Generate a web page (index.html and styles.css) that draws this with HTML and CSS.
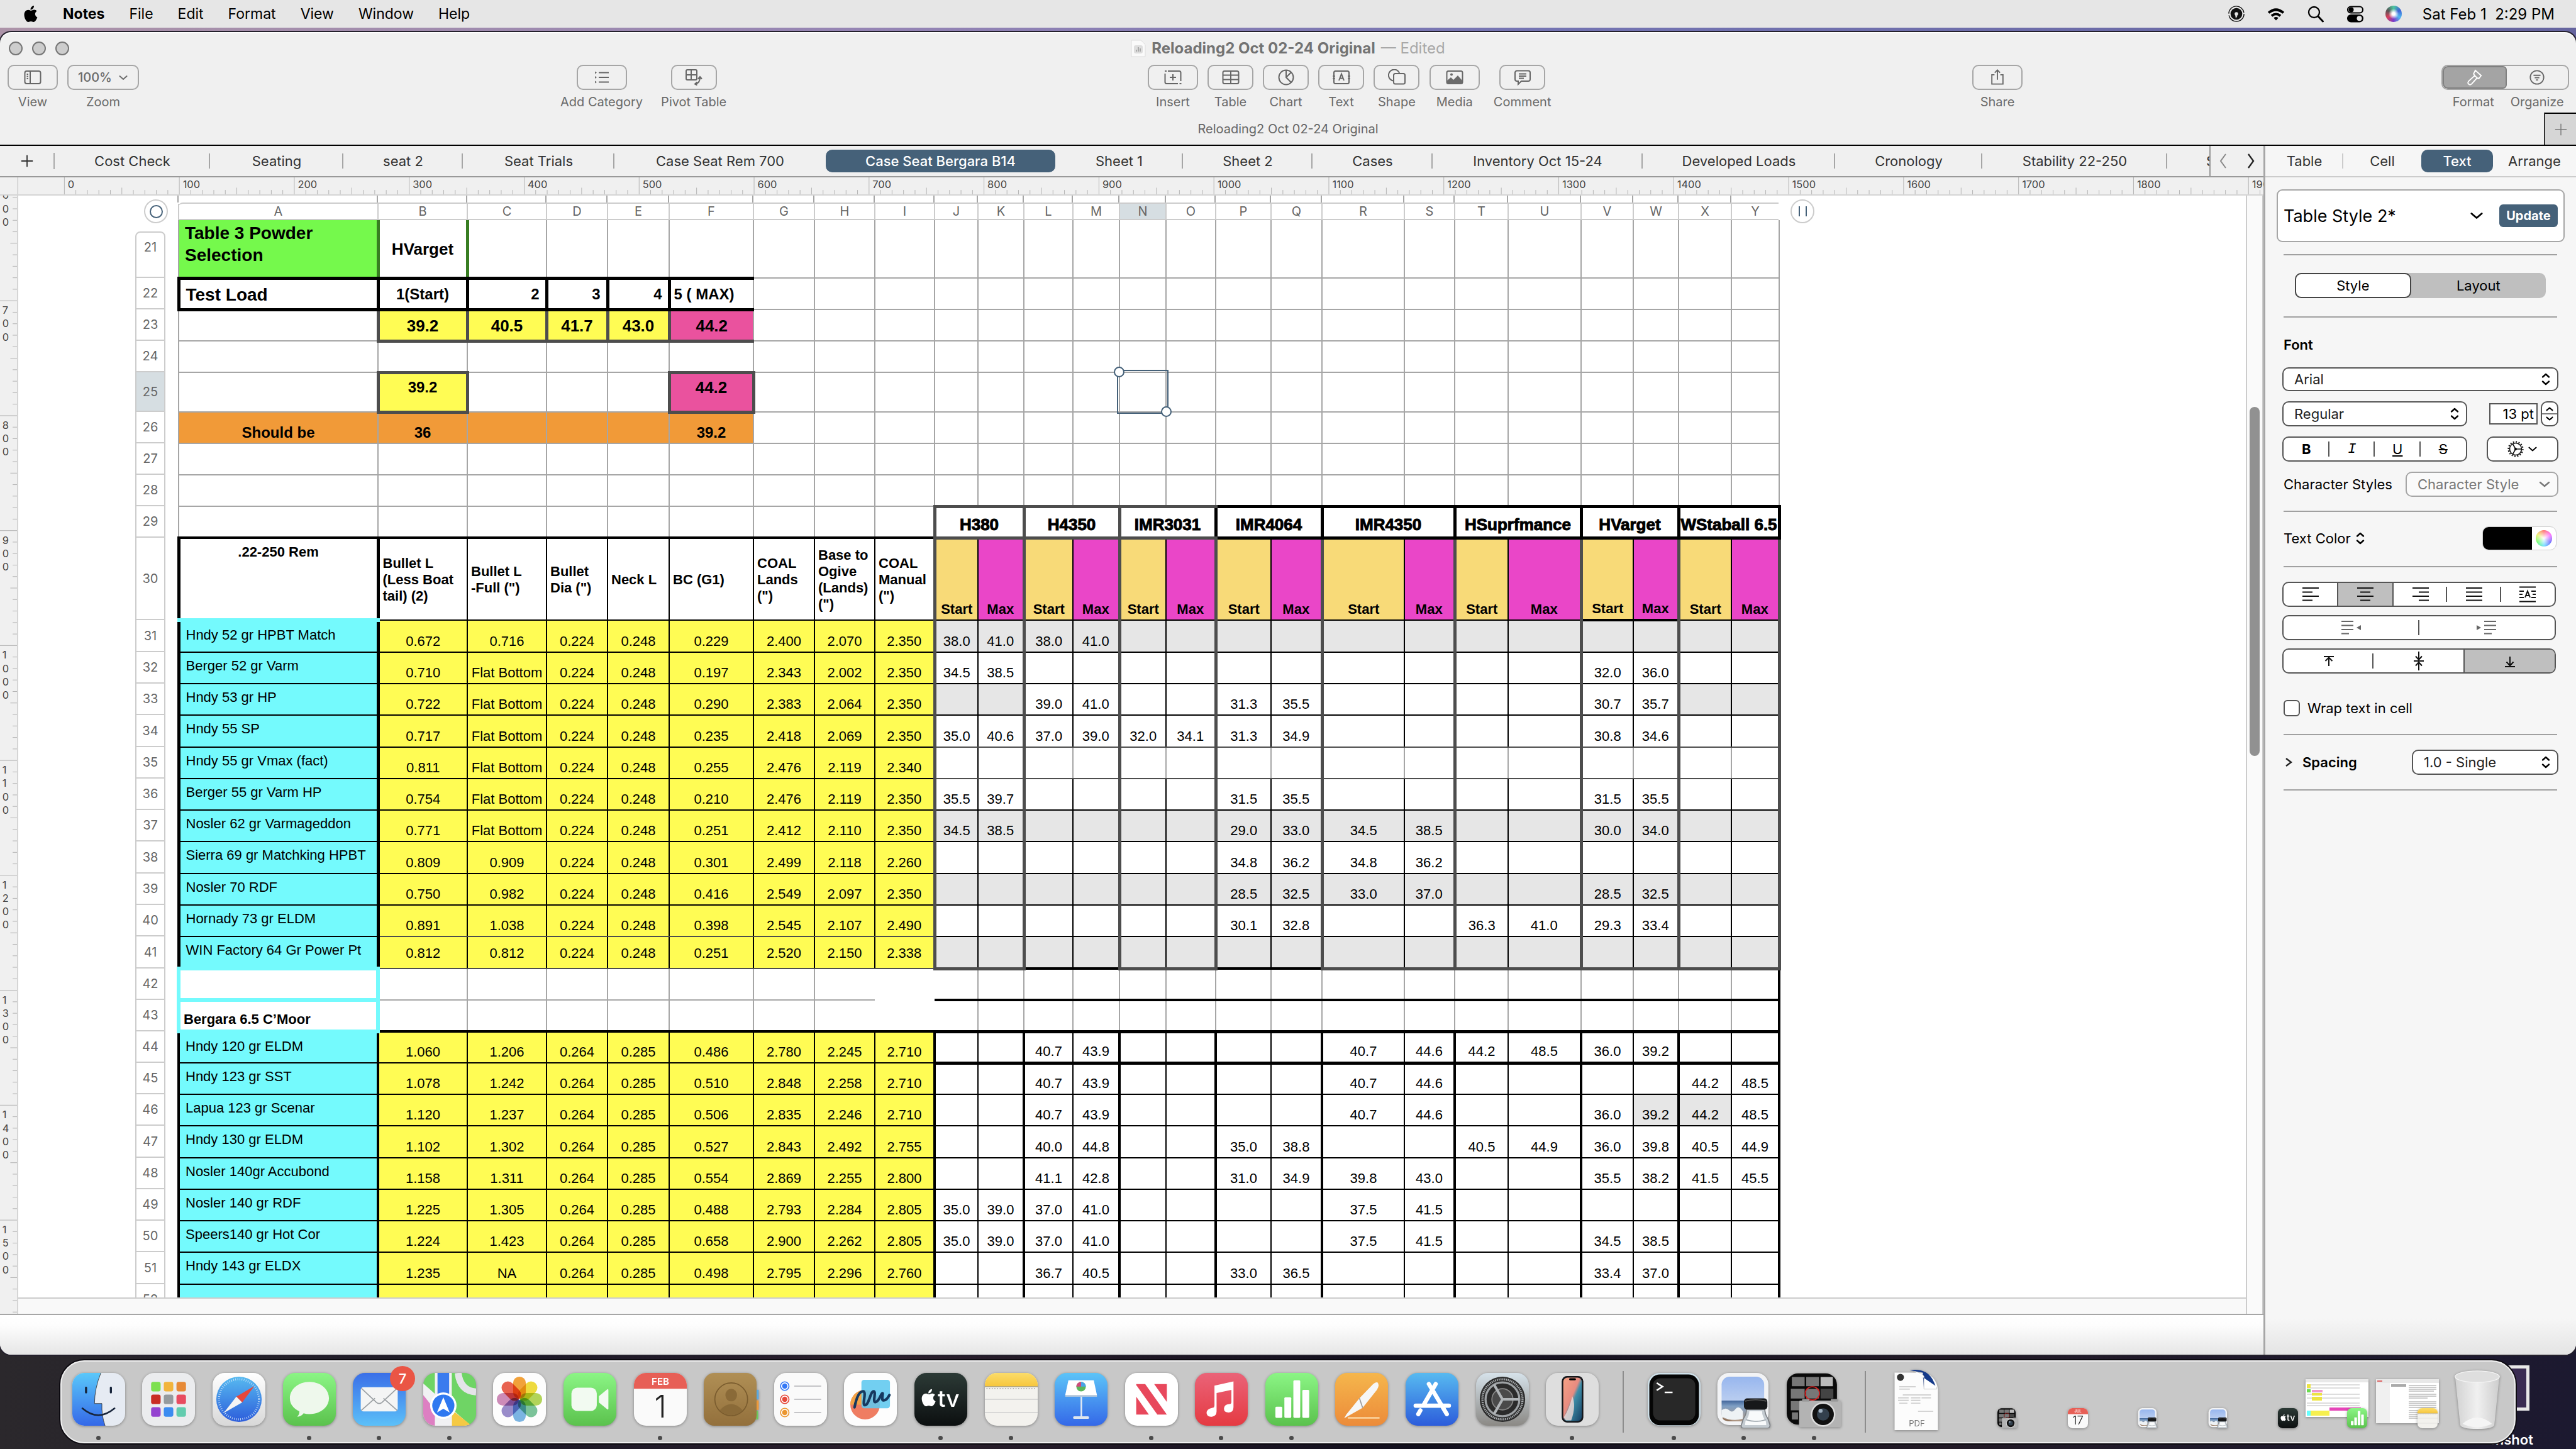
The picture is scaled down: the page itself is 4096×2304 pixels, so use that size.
FILE: index.html
```html
<!DOCTYPE html>
<html lang="en">
<head>
    <meta charset="UTF-8">
    <title>Reloading2 Oct 02-24 Original</title>
    <link rel="stylesheet" href="styles.css">
</head>
<body>
<svg class="defs" width="0" height="0" aria-hidden="true">
    <defs>
        <linearGradient id="g-finder" x1="0" y1="0" x2="0" y2="1"><stop offset="0" stop-color="#5ac8fa"/><stop offset="1" stop-color="#3468e8"/></linearGradient>
        <linearGradient id="g-green" x1="0" y1="0" x2="0" y2="1"><stop offset="0" stop-color="#8bf585"/><stop offset="1" stop-color="#5bc24d"/></linearGradient>
        <linearGradient id="g-mail" x1="0" y1="0" x2="0" y2="1"><stop offset="0" stop-color="#3a6fe8"/><stop offset="1" stop-color="#5cc0f8"/></linearGradient>
        <linearGradient id="g-keynote" x1="0" y1="0" x2="0" y2="1"><stop offset="0" stop-color="#5cc4f8"/><stop offset="1" stop-color="#3468e8"/></linearGradient>
        <linearGradient id="g-blue" x1="0" y1="0" x2="0" y2="1"><stop offset="0" stop-color="#57baf0"/><stop offset="1" stop-color="#2c5cdb"/></linearGradient>
        <linearGradient id="g-red" x1="0" y1="0" x2="0" y2="1"><stop offset="0" stop-color="#ea6378"/><stop offset="1" stop-color="#e53a42"/></linearGradient>
        <linearGradient id="g-orange" x1="0" y1="0" x2="0" y2="1"><stop offset="0" stop-color="#f5b64c"/><stop offset="1" stop-color="#ec8b3a"/></linearGradient>
        <linearGradient id="g-dark" x1="0" y1="0" x2="0" y2="1"><stop offset="0" stop-color="#2c3a36"/><stop offset="1" stop-color="#0c0f10"/></linearGradient>
        <linearGradient id="g-white" x1="0" y1="0" x2="0" y2="1"><stop offset="0" stop-color="#fff"/><stop offset="1" stop-color="#d8d8d8"/></linearGradient>
        <linearGradient id="g-gray" x1="0" y1="0" x2="0" y2="1"><stop offset="0" stop-color="#d6e2ea"/><stop offset="1" stop-color="#8b8985"/></linearGradient>
        <linearGradient id="g-yellow" x1="0" y1="0" x2="0" y2="1"><stop offset="0" stop-color="#fbdc6a"/><stop offset="1" stop-color="#f7c63c"/></linearGradient>
        <linearGradient id="g-tan" x1="0" y1="0" x2="0" y2="1"><stop offset="0" stop-color="#b08f55"/><stop offset="1" stop-color="#93703c"/></linearGradient>
        <linearGradient id="g-phone" x1="0" y1="0" x2="1" y2="1"><stop offset="0" stop-color="#f5a285"/><stop offset=".45" stop-color="#e88b80"/><stop offset=".55" stop-color="#3f8ea8"/><stop offset="1" stop-color="#163f63"/></linearGradient>
        <linearGradient id="g-sky" x1="0" y1="0" x2="0" y2="1"><stop offset="0" stop-color="#97b6ee"/><stop offset=".53" stop-color="#b9cdf0"/><stop offset=".54" stop-color="#44689c"/><stop offset=".66" stop-color="#7f9fc4"/><stop offset="1" stop-color="#b59a84"/></linearGradient>
        <linearGradient id="g-trash" x1="0" y1="0" x2="1" y2="0"><stop offset="0" stop-color="#d2d2d2"/><stop offset=".5" stop-color="#f0f0f0"/><stop offset="1" stop-color="#cdcdcd"/></linearGradient>
        <clipPath id="tile"><rect width="100" height="100" rx="23"/></clipPath>
    </defs>
    <symbol id="apple" viewBox="0 0 24 28"><path d="M17 1c.2 2-.6 3.600-1.700 4.800C14.200 7 12.700 7.600 11.500 7.400 11.300 5.700 12.100 4 13.100 2.900 14.200 1.800 15.800 1 17 1zM21.500 9.800c-4 2.600-3.200 8 .9 9.700C21.300 22.800 18.800 26.800 16.400 26.900c-1.700.1-2.300-1-4.200-1s-2.600 1-4.200 1C5 27 1.500 20.700 1.500 15.400c0-4.800 3-7.700 6.400-7.700 1.900 0 3.300 1.200 4.500 1.200S15.300 7.500 17.600 7.600c1.500.1 3 .8 3.900 2.200z"/></symbol>
    <symbol id="updown" viewBox="0 0 16 24"><path d="M3 8.500 8 4l5 4.500M3 15.500 8 20l5-4.500" fill="none" stroke="currentColor" stroke-width="2.400" stroke-linecap="round" stroke-linejoin="round"/></symbol>
    <symbol id="chev" viewBox="0 0 20 12"><path d="M3 3l7 6 7-6" fill="none" stroke="currentColor" stroke-width="2.400" stroke-linecap="round" stroke-linejoin="round"/></symbol>
    <symbol id="ic-calendar" viewBox="0 0 100 100"><g clip-path="url(#tile)"><rect width="100" height="100" fill="#fafafa"/><rect width="100" height="30" fill="#e75f56"/></g></symbol>
    <symbol id="ic-tv" viewBox="0 0 100 100"><rect width="100" height="100" rx="23" fill="url(#g-dark)"/><svg x="12" y="28" width="30" height="38" viewBox="0 0 24 28" fill="#fff"><path d="M17 1c.2 2-.6 3.600-1.700 4.800C14.200 7 12.700 7.600 11.500 7.400 11.300 5.700 12.100 4 13.100 2.900 14.200 1.800 15.800 1 17 1zM21.500 9.800c-4 2.600-3.200 8 .9 9.700C21.300 22.800 18.800 26.800 16.400 26.900c-1.700.1-2.300-1-4.200-1s-2.600 1-4.200 1C5 27 1.500 20.700 1.500 15.400c0-4.800 3-7.700 6.400-7.700 1.900 0 3.300 1.200 4.500 1.200S15.300 7.500 17.600 7.600c1.500.1 3 .8 3.900 2.200z"/></svg><text x="44" y="64" class="tv-text">tv</text></symbol>
    <symbol id="ic-notes" viewBox="0 0 100 100"><g clip-path="url(#tile)"><rect width="100" height="100" fill="#f3f2ee"/><rect width="100" height="26" fill="url(#g-yellow)"/><path d="M0 26h100" stroke="#a09880" stroke-width="1.500"/><path d="M3 29.500h95" stroke="#aaa" stroke-width="2" stroke-dasharray="2 3"/><path d="M0 50h100M0 75h100" stroke="#cfcfcf" stroke-width="1.500"/></g></symbol>
    <symbol id="ic-numbers" viewBox="0 0 100 100"><rect width="100" height="100" rx="23" fill="url(#g-green)"/><g fill="#fff"><rect x="19" y="64" width="13" height="21" rx="2"/><rect x="36" y="46" width="13" height="39" rx="2"/><rect x="53" y="14" width="13" height="71" rx="2"/><rect x="70" y="32" width="13" height="53" rx="2"/></g></symbol>
    <symbol id="ic-preview" viewBox="0 0 100 104"><rect width="96" height="98" rx="22" fill="#f2f3f5"/><rect x="8" y="7" width="80" height="84" rx="15" fill="url(#g-sky)"/><path d="M8 70q8-6 14 0t12-2 14 4v14q-20 6-40-4z" fill="#eef2f5"/><path d="M9 84q14 8 36 6v1H23Q12 91 9 84z" fill="#8d6f58"/><path d="M55 66h34q0 12 6 20l4 12q0 6-6 6H50q-6 0-5-6l4-12q6-8 6-20z" fill="#c4cbd1" stroke="#7d8287" stroke-width="2"/><path d="M60 72h24q0 10 7 18l1 8H52l1-8q7-8 7-18z" fill="#f8fafb"/><path d="M54 88q18 6 37 0" fill="none" stroke="#9aa3aa" stroke-width="2"/><rect x="50" y="48" width="44" height="21" rx="6" fill="#17181a"/><path d="M52 53q20-5 40 0" fill="none" stroke="#555" stroke-width="2"/></symbol>
    <symbol id="ic-shot" viewBox="0 0 108 106"><rect width="98" height="100" rx="22" fill="#0a0a0a"/><g fill="#777"><rect x="10" y="7" width="25" height="18"/><rect x="38" y="7" width="25" height="18"/><rect x="66" y="7" width="24" height="18" fill="#bbb"/><rect x="8" y="30" width="27" height="19"/><rect x="38" y="30" width="25" height="19"/><rect x="66" y="30" width="25" height="19" fill="#444"/><rect x="8" y="54" width="16" height="18"/><rect x="10" y="76" width="12" height="14"/></g><ellipse cx="50" cy="39" rx="14" ry="13" fill="none" stroke="#d22" stroke-width="2"/><rect x="24" y="53" width="82" height="52" rx="3" fill="#b3b3b3"/><rect x="30" y="50" width="14" height="5" fill="#999"/><rect x="86" y="50" width="14" height="5" fill="#999"/><circle cx="71" cy="80" r="24" fill="#ddd"/><circle cx="71" cy="80" r="21" fill="#111"/><circle cx="71" cy="80" r="12" fill="#33404d"/><circle cx="66" cy="73" r="4" fill="#9fb0c0"/></symbol>
</svg>

<header class="menubar">
    <nav class="menus">
        <svg class="apple-logo"><use href="#apple"/></svg>
        <b>Notes</b><span>File</span><span>Edit</span><span>Format</span><span>View</span><span>Window</span><span>Help</span>
    </nav>
    <div class="status">
        <svg viewBox="0 0 30 30"><circle cx="15" cy="15" r="13" fill="none" stroke="#111" stroke-width="1.500" stroke-dasharray="38 3"/><circle cx="15" cy="15" r="10" fill="#111"/><circle cx="15" cy="15" r="3" fill="#e6e6e6"/><path d="M13 17l4 1-3 5z" fill="#e6e6e6"/></svg>
        <svg viewBox="0 0 34 26"><path d="M2 9.500Q17-3.500 32 9.500l-3.200 3.300Q17 3.500 5.200 12.800zM7.500 15Q17 7.500 26.500 15l-3.200 3.300Q17 13 10.700 18.300zM12.800 20.300q4.200-3 8.400 0L17 25z"/></svg>
        <svg viewBox="0 0 28 28"><circle cx="11.500" cy="11.500" r="8.500" fill="none" stroke="#000" stroke-width="2.300"/><path d="M18 18l7.500 8" stroke="#000" stroke-width="3" stroke-linecap="round"/></svg>
        <svg viewBox="0 0 28 28"><rect x="2" y="2.500" width="24" height="10" rx="5" fill="none" stroke="#000" stroke-width="2.200"/><circle cx="7.500" cy="7.500" r="4"/><rect x="1" y="15" width="26" height="12.500" rx="6.200"/><circle cx="20.500" cy="21.200" r="4" fill="#e6e6e6"/></svg>
        <i class="siri"></i>
        <time>Sat Feb 1&nbsp; 2:29 PM</time>
    </div>
</header>

<main class="window">
    <div class="titlebar">
        <div class="lights"><i></i><i></i><i></i></div>
        <h1><svg class="doc-icon" viewBox="0 0 24 28"><path d="M1 1h15l7 7v19H1z" fill="#fafafa" stroke="#ddd"/><rect x="5" y="9" width="14" height="13" rx="3" fill="#ddd"/><path d="M9 19v-3M12 19v-7M15 19v-5" stroke="#999" stroke-width="1.500"/></svg>Reloading2 Oct 02-24 Original <span>— Edited</span></h1>
        <div></div>
    </div>

    <div class="toolbar">
        <div class="tools">
            <div class="tool"><button aria-label="View"><svg viewBox="0 0 28 26"><rect x="1.500" y="3" width="25" height="20" rx="3"/><path d="M10 3v20M4.500 8h2.500M4.500 11.500h2.500M4.500 15h2.500"/></svg></button><span>View</span></div>
            <div class="tool"><button class="zoom">100% <svg class="chev"><use href="#chev"/></svg></button><span>Zoom</span></div>
        </div>
        <div class="tools">
            <div class="tool"><button aria-label="Add Category"><svg viewBox="0 0 28 26"><path d="M9 5.500h16M9 13h16M9 20.500h16"/><path d="M3 3.500l3 2-3 2zM3 11l3 2-3 2zM3 18.500l3 2-3 2z" class="solid"/></svg></button><span>Add Category</span></div>
            <div class="tool"><button class="small" aria-label="Pivot Table"><svg viewBox="0 0 28 26"><rect x="2" y="1" width="17" height="16" rx="2"/><path d="M2 9h17M10 1v16M24 13q0 9-7 10.500M21 15.500l3-3.500 3 3.500M19.500 20.500 16 23.500l3.500 2"/></svg></button><span>Pivot Table</span></div>
        </div>
        <div class="tools">
            <div class="tool"><button aria-label="Insert"><svg viewBox="0 0 28 26"><path d="M6 3h18a2.500 2.500 0 0 1 2.500 2.500V19M22 23H4a2.500 2.500 0 0 1-2.500-2.500V7M14 8v10M9 13h10"/><path d="M1 2h3v2H1zM24.500 22h3v2h-3z" class="solid"/></svg></button><span>Insert</span></div>
            <div class="tool"><button class="small" aria-label="Table"><svg viewBox="0 0 28 26"><rect x="1.500" y="3" width="25" height="20" rx="2.500"/><path d="M1.500 9.500h25M1.500 16.500h25M14 3v20"/></svg></button><span>Table</span></div>
            <div class="tool"><button class="small" aria-label="Chart"><svg viewBox="0 0 28 26"><circle cx="14" cy="13" r="11.500"/><path d="M14 1.500V13l8 8M14 13l8-8"/></svg></button><span>Chart</span></div>
            <div class="tool"><button class="small" aria-label="Text"><svg viewBox="0 0 28 26"><rect x="2" y="3" width="24" height="20" rx="2.500"/><path d="M10 18l4-10.500L18 18M11.500 14.500h5"/><path d="M0 11h4M24 11h4M0 15h4M24 15h4" stroke-width="1.500"/></svg></button><span>Text</span></div>
            <div class="tool"><button class="small" aria-label="Shape"><svg viewBox="0 0 28 26"><path d="M9 18.500A9 9 0 1 1 18.500 7"/><rect x="9" y="7" width="18" height="16.500" rx="2.500"/></svg></button><span>Shape</span></div>
            <div class="tool"><button aria-label="Media"><svg viewBox="0 0 28 26"><rect x="1.500" y="3" width="25" height="20" rx="2.500"/><path d="M2 18l6-5 4 4 7-7 7 8v5H2z" class="solid"/><circle cx="9" cy="8.500" r="2" class="solid"/></svg></button><span>Media</span></div>
            <div class="tool"><button class="small" aria-label="Comment"><svg viewBox="0 0 28 26"><path d="M5 2.500h18a3 3 0 0 1 3 3V16a3 3 0 0 1-3 3H12l-5 5v-5H5a3 3 0 0 1-3-3V5.500a3 3 0 0 1 3-3zM8 7.500h12M8 11h12M8 14.500h8"/></svg></button><span>Comment</span></div>
        </div>
        <div class="tools">
            <div class="tool"><button aria-label="Share"><svg viewBox="0 0 28 28"><path d="M9 9.500H4.500v16h19v-16H19M14 18V1.500M9.500 6 14 1.500 18.500 6"/></svg></button><span>Share</span></div>
        </div>
        <div class="tools">
            <div class="tool pair">
                <div class="switch">
                    <button class="on" aria-label="Format"><svg viewBox="0 0 28 28"><path d="M15 2l10 9-4 5-3-1-9 10q-3 3-5.500.5T4 20l10-9-2-3zM14 11l5 5"/></svg></button>
                    <button aria-label="Organize"><svg viewBox="0 0 28 28"><circle cx="14" cy="14" r="11.500"/><path d="M8 10.500h12M10 14.500h8M12 18.500h4"/></svg></button>
                </div>
                <div class="switch-labels"><span>Format</span><span>Organize</span></div>
            </div>
        </div>
    </div>

    <div class="doctabs">
        <span>Reloading2 Oct 02-24 Original</span>
        <button class="newtab" aria-label="New tab"><svg viewBox="0 0 24 24"><path d="M12 2v20M2 12h20" stroke="#777" stroke-width="1.500"/></svg></button>
    </div>

    <div class="work">
        <section class="sheet">
            <nav class="sheets">
                <button class="add" aria-label="Add sheet"><svg viewBox="0 0 24 24"><path d="M12 2v20M2 12h20" stroke="#333" stroke-width="2"/></svg></button>
                <a href="#" class="sep">Cost Check</a>
                <a href="#" class="sep">Seating</a>
                <a href="#" class="sep">seat 2</a>
                <a href="#" class="sep">Seat Trials</a>
                <a href="#">Case Seat Rem 700</a>
                <a href="#" class="current">Case Seat Bergara B14</a>
                <a href="#" class="sep">Sheet 1</a>
                <a href="#" class="sep">Sheet 2</a>
                <a href="#" class="sep">Cases</a>
                <a href="#" class="sep">Inventory Oct 15-24</a>
                <a href="#" class="sep">Developed Loads</a>
                <a href="#" class="sep">Cronology</a>
                <a href="#" class="sep">Stability 22-250</a>
                <a href="#" class="cut">S</a>
                <div class="pager">
                    <svg viewBox="0 0 14 28"><path d="M11 3 3 14l8 11" fill="none" stroke="#888" stroke-width="2"/></svg>
                    <svg viewBox="0 0 14 28"><path d="M3 3l8 11L3 25" fill="none" stroke="#222" stroke-width="2.400"/></svg>
                </div>
            </nav>
            <svg class="ruler-x" id="ruler-x" viewBox="0 0 1969 15" preserveAspectRatio="xMinYMin slice"></svg>
            <div class="stage">
                <svg class="ruler-y" id="ruler-y" viewBox="0 0 16 973" preserveAspectRatio="xMinYMin slice"></svg>
                <div class="page">
                    <div class="canvas">
                        <div class="peek" id="peek"></div>
                        <div class="colhead">
                            <i class="ring"></i>
                            <div class="letters" id="letters"></div>
                            <i class="handle"></i>
                        </div>
                        <div class="body">
                            <div class="rowhead" id="rowhead"></div>
                            <table id="loads"><colgroup id="cols"></colgroup><tbody id="rows"></tbody></table>
                        </div>
                    </div>
                    <div class="hscroll"></div>
                </div>
                <div class="vscroll"><i></i></div>
            </div>
            <div class="foot"></div>
        </section>

        <aside class="inspector">
            <nav class="tabs">
                <a href="#" class="sep">Table</a><a href="#">Cell</a><a href="#" class="current">Text</a><a href="#">Arrange</a>
            </nav>
            <div class="stylebox"><span>Table Style 2*</span><svg class="chev"><use href="#chev"/></svg><button>Update</button></div>
            <div class="form">
                <hr class="first">
                <div class="modes"><button class="on">Style</button><button>Layout</button></div>
                <hr class="after-modes">
                <label class="heading" for="font">Font</label>
                <div class="pick font"><select id="font"><option>Arial</option></select><svg class="updown"><use href="#updown"/></svg></div>
                <div class="line weight">
                    <div class="pick wide"><select aria-label="Weight"><option>Regular</option></select><svg class="updown"><use href="#updown"/></svg></div>
                    <div class="size"><input type="text" value="13 pt" aria-label="Size"><button class="stepper" aria-label="Step size"><svg viewBox="0 0 28 40"><path d="M8 14l6-5 6 5M8 26l6 5 6-5" fill="none" stroke="#000" stroke-width="2.400"/><path d="M0 20h28" stroke="#555" stroke-width="2"/></svg></button></div>
                </div>
                <div class="line">
                    <div class="seg wide"><button class="sep"><b>B</b></button><button class="sep"><i>I</i></button><button class="sep"><u>U</u></button><button><s>S</s></button></div>
                    <button class="gear" aria-label="Advanced"><svg viewBox="0 0 26 26"><circle cx="13" cy="13" r="9.500" fill="none" stroke="#111" stroke-width="1.600"/><circle cx="13" cy="13" r="11.500" fill="none" stroke="#111" stroke-width="2.200" stroke-dasharray="2 2.500"/><path d="M13 13h9M13 13 8.500 5M13 13l-4.500 8" stroke="#111" stroke-width="1.600"/><circle cx="13" cy="13" r="2"/></svg><svg class="chev"><use href="#chev"/></svg></button>
                </div>
                <div class="line charstyle"><label for="cs">Character Styles</label><div class="pick muted"><select id="cs"><option>Character Style</option></select><svg class="chev"><use href="#chev"/></svg></div></div>
                <hr class="after-char">
                <div class="line color"><span>Text Color <svg class="updown"><use href="#updown"/></svg></span><div class="swatch"><i class="well"></i><i class="wheel"></i></div></div>
                <hr class="after-color">
                <div class="seg align">
                    <button aria-label="Left"><svg viewBox="0 0 26 26"><path d="M0 3h26M0 9.500h16M0 16h26M0 22.500h16"/></svg></button>
                    <button class="on" aria-label="Center"><svg viewBox="0 0 26 26"><path d="M0 3h26M5 9.500h16M0 16h26M5 22.500h16"/></svg></button>
                    <button class="sep" aria-label="Right"><svg viewBox="0 0 26 26"><path d="M0 3h26M10 9.500h16M0 16h26M10 22.500h16"/></svg></button>
                    <button class="sep" aria-label="Justify"><svg viewBox="0 0 26 26"><path d="M0 3h26M0 9.500h26M0 16h26M0 22.500h26"/></svg></button>
                    <button aria-label="Auto"><svg class="even" viewBox="0 0 26 26"><path d="M0 1.500h26M0 8h7M19 8h7M0 13h5M21 13h5M0 18h7M19 18h7M0 24.500h26M9 18l4-10 4 10M10.500 15h5"/></svg></button>
                </div>
                <div class="seg">
                    <button class="sep" aria-label="Outdent"><svg class="dim" viewBox="0 0 32 26"><path d="M0 3h19M0 9.500h19M0 16h19M0 22.500h12"/><path d="M31 9v8l-7-4z" class="solid"/></svg></button>
                    <button aria-label="Indent"><svg class="dim" viewBox="0 0 32 26"><path d="M12 3h19M12 9.500h19M12 16h19M12 22.500h12"/><path d="M0 9v8l7-4z" class="solid"/></svg></button>
                </div>
                <div class="seg">
                    <button class="sep" aria-label="Top"><svg class="even" viewBox="0 0 26 26"><path d="M5 6h16M13 21V7M7.500 13 13 7.500l5.500 5.500"/></svg></button>
                    <button aria-label="Middle"><svg class="tall" viewBox="0 0 26 32"><path d="M5 16h16M13 1v13M8 8.500l5 5.500 5-5.500M13 31V18M8 23.500l5-5.500 5 5.500"/></svg></button>
                    <button class="on last" aria-label="Bottom"><svg class="even" viewBox="0 0 26 26"><path d="M5 22h16M13 6v15M7.500 14.500l5.500 6 5.500-6"/></svg></button>
                </div>
                <div class="line wrap"><input type="checkbox" id="wrap"><label for="wrap">Wrap text in cell</label></div>
                <hr class="after-wrap">
                <div class="line spacing"><svg viewBox="0 0 12 18"><path d="M2 3l8 6-8 6" fill="none" stroke="#222" stroke-width="2.400"/></svg><label for="sp">Spacing</label><div class="pick"><select id="sp"><option>1.0 - Single</option></select><svg class="updown"><use href="#updown"/></svg></div></div>
                <hr class="after-spacing">
            </div>
        </aside>
    </div>
</main>

<footer class="desk">
    <div class="shotfile"><i></i><span>Screenshot</span></div>
    <div class="dock">
        <div class="app run"><svg viewBox="0 0 100 100"><g clip-path="url(#tile)"><rect width="100" height="100" fill="#e6ebf3"/><path d="M0 0h54Q42 30 42 58h14Q55 80 62 100H0z" fill="url(#g-finder)"/><path d="M54 0Q42 30 42 58h14Q55 80 62 100" fill="none" stroke="#333" stroke-width="1"/><path d="M26 28v9M73 28v9" stroke="#17243a" stroke-width="4" stroke-linecap="round"/><path d="M19 67q30 26 61 0" fill="none" stroke="#17243a" stroke-width="3" stroke-linecap="round"/></g></svg></div>
        <div class="app"><svg viewBox="0 0 100 100"><rect width="100" height="100" rx="23" fill="#ebecee"/><rect x="17" y="17" width="18" height="18" rx="4" fill="#7ee04f"/><rect x="41" y="17" width="18" height="18" rx="4" fill="#f2b43c"/><rect x="65" y="17" width="18" height="18" rx="4" fill="#e78a36"/><rect x="17" y="41" width="18" height="18" rx="4" fill="#c92d23"/><rect x="41" y="41" width="18" height="18" rx="4" fill="#959b9e"/><rect x="65" y="41" width="18" height="18" rx="4" fill="#e84c60"/><rect x="17" y="65" width="18" height="18" rx="4" fill="#9443d0"/><rect x="41" y="65" width="18" height="18" rx="4" fill="#3c8cf0"/><rect x="65" y="65" width="18" height="18" rx="4" fill="#62ccae"/></svg></div>
        <div class="app"><svg viewBox="0 0 100 100"><rect width="100" height="100" rx="23" fill="url(#g-white)"/><circle cx="50" cy="50" r="43" fill="url(#g-blue)"/><circle cx="50" cy="50" r="38" fill="none" stroke="#d7ebfa" stroke-width="4" stroke-dasharray="1 3"/><path d="M79 25 56 56 45 45z" fill="#e6473c"/><path d="M21 76 45 45l11 11z" fill="#f4f4f4"/></svg></div>
        <div class="app run"><svg viewBox="0 0 100 100"><rect width="100" height="100" rx="23" fill="url(#g-green)"/><path d="M50 17c21 0 37 14 37 31S71 78 50 78q-6 0-11-1.500Q34 83 27 83q4-4 4-10Q13 64 13 48c0-17 16-31 37-31z" fill="#eef8ec"/></svg></div>
        <div class="app run"><svg viewBox="0 0 100 100"><rect width="100" height="100" rx="23" fill="url(#g-mail)"/><rect x="15" y="27" width="70" height="46" rx="5" fill="#f4f5f5"/><path d="M16 71l26-23M84 71 58 48M16 29l29 27q5 4 10 0l29-27" fill="none" stroke="#9a9fa3" stroke-width="2"/></svg><b class="badge">7</b></div>
        <div class="app run"><svg viewBox="0 0 100 100"><g clip-path="url(#tile)"><rect width="100" height="100" fill="#6fd465"/><path d="M0 20l90 80H0z" fill="#f1f1f3"/><path d="M0 42l24 30v28H0z" fill="#dd7fc2"/><path d="M54 70l38 30H54z" fill="#f5c944"/><path d="M66 0q4 34 34 36" fill="none" stroke="#e4e4e8" stroke-width="13"/><path d="M22 0h32v100H22z" fill="#f1f1f3"/><path d="M27 0h22v50H27z" fill="#3a7bee"/></g><circle cx="38" cy="62" r="25" fill="#fff"/><circle cx="38" cy="62" r="21" fill="#2f78f0"/><path d="M38 46l12 29-12-7-12 7z" fill="#fff"/></svg></div>
        <div class="app"><svg viewBox="0 0 100 100"><rect width="100" height="100" rx="23" fill="#fdfdfd"/><g class="petals"><rect x="38" y="7" width="24" height="42" rx="12" fill="#f3a23a"/><rect x="38" y="7" width="24" height="42" rx="12" fill="#f0dc3e" transform="rotate(45 50 50)"/><rect x="38" y="7" width="24" height="42" rx="12" fill="#b4d65a" transform="rotate(90 50 50)"/><rect x="38" y="7" width="24" height="42" rx="12" fill="#7cc59a" transform="rotate(135 50 50)"/><rect x="38" y="7" width="24" height="42" rx="12" fill="#7cb6e4" transform="rotate(180 50 50)"/><rect x="38" y="7" width="24" height="42" rx="12" fill="#9a8dcc" transform="rotate(225 50 50)"/><rect x="38" y="7" width="24" height="42" rx="12" fill="#cf8cba" transform="rotate(270 50 50)"/><rect x="38" y="7" width="24" height="42" rx="12" fill="#ea6350" transform="rotate(315 50 50)"/></g></svg></div>
        <div class="app"><svg viewBox="0 0 100 100"><rect width="100" height="100" rx="23" fill="url(#g-green)"/><rect x="15" y="28" width="48" height="44" rx="11" fill="#f2faf1"/><path d="M67 44 83 31q2-1 2 2v34q0 3-2 2L67 56z" fill="#f2faf1"/></svg></div>
        <div class="app run"><svg viewBox="0 0 100 100"><use href="#ic-calendar"/><text x="50" y="23" class="cal-month">FEB</text><text x="50" y="84" class="cal-day">1</text></svg></div>
        <div class="app"><svg viewBox="0 0 100 100"><path d="M90 32h14v18H90z" fill="#5aa9e0"/><path d="M90 52h14v18H90z" fill="#ee9a3a"/><path d="M90 72h13v16H90z" fill="#6bc95c"/><rect width="100" height="100" rx="20" fill="url(#g-tan)"/><circle cx="52" cy="50" r="31" fill="none" stroke="#7a5c2e" stroke-width="2"/><ellipse cx="52" cy="42" rx="11" ry="12" fill="#8a6a38"/><path d="M30 71q22-24 44 0-22 18-44 0z" fill="#8a6a38"/></svg></div>
        <div class="app"><svg viewBox="0 0 100 100"><rect width="100" height="100" rx="23" fill="#fafafa"/><g fill="#fff" stroke-width="2"><circle cx="20" cy="25" r="8" stroke="#3478f6"/><circle cx="20" cy="50" r="8" stroke="#e5483b"/><circle cx="20" cy="75" r="8" stroke="#eb962f"/></g><circle cx="20" cy="25" r="5" fill="#3478f6"/><circle cx="20" cy="50" r="5" fill="#e5483b"/><circle cx="20" cy="75" r="5" fill="#eb962f"/><path d="M38 25h51M38 50h51M38 75h51" stroke="#b4b4b8" stroke-width="2"/></svg></div>
        <div class="app"><svg viewBox="0 0 100 100"><rect width="100" height="100" rx="23" fill="#fdfdfd"/><circle cx="40" cy="60" r="28" fill="#ef7d62"/><path d="M12 60a28 28 0 0 1 28-28v28z" fill="#f3a347"/><rect x="33" y="13" width="54" height="54" rx="5" fill="#5ec8ef" fill-opacity=".88"/><path d="M20 65q6-30 16-30c8 0-3 26 4 26s10-26 16-26-3 22 4 20 8-12 12-16-3 14 3 13 7-4 11-10" fill="none" stroke="#16395f" stroke-width="5" stroke-linecap="round"/></svg></div>
        <div class="app run"><svg><use href="#ic-tv"/></svg></div>
        <div class="app run"><svg><use href="#ic-notes"/></svg></div>
        <div class="app"><svg viewBox="0 0 100 100"><rect width="100" height="100" rx="23" fill="url(#g-keynote)"/><path d="M26 14h48l6 28H20z" fill="#fff"/><path d="M20 42h60v3H20z" fill="#c8d0d8"/><circle cx="50" cy="26" r="9" fill="#5cb85c"/><path d="M50 26V17a9 9 0 0 1 9 9z" fill="#4aa3e8"/><path d="M50 26h-9a9 9 0 0 1 9-9z" fill="#d04a7c"/><path d="M49 45h3v38h-3z" fill="#e4ebf2"/><rect x="35" y="82" width="30" height="5" rx="2" fill="#dfe6ee"/></svg></div>
        <div class="app run"><svg viewBox="0 0 100 100"><rect width="100" height="100" rx="23" fill="#fff"/><path d="M21 21h16l42 42v16H62L21 38z" fill="#fff"/><path d="M21 21h17l41 58H61L21 23z" fill="#e8485c"/><path d="M55 21h24v34z" fill="#e8485c"/><path d="M21 45v34h24z" fill="#e8485c"/></svg></div>
        <div class="app run"><svg viewBox="0 0 100 100"><rect width="100" height="100" rx="23" fill="url(#g-red)"/><path d="M37 24 73 16v49q0 10-9 10t-9-7q0-8 10-9 4 0 4-4V32L41 38v35q0 9-9 10t-10-7q0-8 11-10 4 0 4-5z" fill="#fff"/></svg></div>
        <div class="app run"><svg><use href="#ic-numbers"/></svg></div>
        <div class="app"><svg viewBox="0 0 100 100"><rect width="100" height="100" rx="23" fill="url(#g-orange)"/><path d="M80 18q5 5-1 14L52 66 22 83l-5 3 4-7L46 48 71 22q5-5 9-4z" fill="#f6f6f6"/><path d="M46 48l6 18" stroke="#999" stroke-width="2"/><path d="M24 85h60" stroke="#fbd5a0" stroke-width="3"/></svg></div>
        <div class="app"><svg viewBox="0 0 100 100"><rect width="100" height="100" rx="23" fill="url(#g-blue)"/><path d="M57 21 35 59M44 21l34 57M19 62h63M28 71l-4 7" stroke="#fff" stroke-width="8" stroke-linecap="round"/></svg></div>
        <div class="app"><svg viewBox="0 0 100 100"><rect width="100" height="100" rx="23" fill="url(#g-gray)"/><circle cx="50" cy="50" r="43" fill="#2b2b2b"/><circle cx="50" cy="50" r="38" fill="none" stroke="#a9adb0" stroke-width="4" stroke-dasharray="2 1.500"/><circle cx="50" cy="50" r="32" fill="none" stroke="#9da1a4" stroke-width="4"/><circle cx="50" cy="50" r="20" fill="#4a4a4a" stroke="#888" stroke-width="2"/><path d="M50 50h32M50 50 34 22M50 50 34 78" stroke="#b0b4b7" stroke-width="5"/></svg></div>
        <div class="app run"><svg viewBox="0 0 100 100"><rect width="100" height="100" rx="23" fill="#dedede"/><rect x="30" y="6" width="41" height="88" rx="10" fill="#15171b"/><rect x="33" y="9" width="35" height="82" rx="8" fill="url(#g-phone)"/><path d="M34 84Q44 70 50 44q8 18-2 46H38z" fill="#f4dcd8" fill-opacity=".8"/><rect x="44" y="10" width="13" height="4" rx="2"/></svg></div>
        <i class="bar"></i>
        <div class="app run"><svg viewBox="0 0 100 100"><rect width="100" height="100" rx="23" fill="#cfe1ea"/><rect x="3" y="3" width="94" height="96" rx="20" fill="#050505"/><rect x="10" y="10" width="80" height="80" rx="14" fill="#282828"/><path d="M17 19l11 7-11 7M32 37h15" fill="none" stroke="#fff" stroke-width="3"/></svg></div>
        <div class="app run"><svg class="roomy"><use href="#ic-preview"/></svg></div>
        <div class="app run"><svg class="roomy"><use href="#ic-shot"/></svg></div>
        <i class="bar"></i>
        <div class="app"><svg class="file" viewBox="0 0 74 104"><path d="M0 6h48q22 4 26 28v70H0z" fill="#fcfcfc"/><path d="M26 2q34-6 44 28L50 33 48 6z" fill="#153a8a"/><path d="M34 4q12 2 16 8v22h22v-4" fill="#fff" stroke="#ccc"/><circle cx="10" cy="14" r="6" fill="#333"/><path d="M8 30h28M8 34h18M14 44h48M6 49h18M28 49h16M6 53h18M28 53h16M46 49h16M8 58h14M28 58h16M40 72h26" stroke="#c4c4c4" stroke-width="1.500"/><text x="38" y="98" class="pdf">PDF</text></svg></div>
        <div class="app mini"><svg><use href="#ic-shot"/></svg></div>
        <div class="app mini"><svg viewBox="0 0 100 100"><use href="#ic-calendar"/><text x="50" y="23" class="cal-month">JUL</text><text x="50" y="82" class="cal-day narrow">17</text></svg></div>
        <div class="app mini"><svg><use href="#ic-preview"/></svg></div>
        <div class="app mini"><svg><use href="#ic-preview"/></svg></div>
        <div class="app mini"><svg><use href="#ic-tv"/></svg></div>
        <div class="app thumb"><svg class="shot" viewBox="0 0 100 60"><rect width="100" height="60" fill="#fff"/><path d="M0 0h100v5H0z" fill="#e8e8e8"/><path d="M2 9h84M2 14h84M2 24h84M2 30h84M2 38h84M2 42h84" stroke="#bbb"/><path d="M2 8h6v6H2zM10 22h16v4H10zM10 28h16v6H10z" fill="#ede343"/><path d="M2 16h6v5H2z" fill="#6bdc4f"/><path d="M10 17h17v4H10z" fill="#e9c"/><path d="M38 45h50v5H38z" fill="#e545b8"/><path d="M8 50h30v8H8z" fill="#f6ef4e"/><path d="M2 50h6v8H2z" fill="#6ff"/></svg><svg class="stamp"><use href="#ic-numbers"/></svg></div>
        <div class="app thumb"><svg class="shot doc" viewBox="0 0 100 70"><rect width="100" height="70" fill="#fff"/><path d="M0 0h100v6H0z" fill="#e8e8e8"/><path d="M2 3h8" stroke="#d66" stroke-width="2"/><path d="M0 6h22v64H0z" fill="#f0f0f0"/><path d="M24 8h24v4H24z" fill="#aaa"/><path d="M52 10h44M52 13h44M52 16h44M52 19h40M52 24h44M52 27h44M52 30h30M52 36h44M52 39h44M52 42h44M52 45h44M52 50h44M52 53h44M52 56h44M52 59h44M52 62h40" stroke="#999"/></svg><svg class="stamp"><use href="#ic-notes"/></svg></div>
        <div class="app"><svg class="trash" viewBox="0 0 80 104"><path d="M1 10 10 96q2 7 30 7t30-7l9-86z" fill="url(#g-trash)"/><ellipse cx="40" cy="11" rx="39" ry="10" fill="#dedede" stroke="#f4f4f4" stroke-width="1.500"/><path d="M14 94q26-22 52 0-26 12-52 0z" fill="#f5f5f5"/></svg></div>
    </div>
</footer>
<script src="script.js"></script>
</body>
</html>
```

FILE: styles.css
```css
* {
    box-sizing: border-box;
}

body {
    margin: 0;
    height: 100vh;
    display: flex;
    flex-direction: column;
    overflow: hidden;
    font-family: Inter, "Liberation Sans", sans-serif;
    font-size: 22px;
    color: #000;
    background:
        linear-gradient(90deg, #ac93a8 0%, #9484b4 35%, #7474b2 60%, #66659f 100%) 0 0 / 100% 90px no-repeat,
        linear-gradient(90deg, #2b282c 0%, #1c1826 20%, #2a1f2c 35%, #120f1d 55%, #221a26 75%, #1c1930 100%);
}

button, input, select {
    font: inherit;
    color: inherit;
    margin: 0;
    padding: 0;
}

a {
    color: inherit;
    text-decoration: none;
}

.defs {
    position: absolute;
}

/* menu bar */

.menubar {
    height: 44px;
    display: flex;
    justify-content: space-between;
    align-items: center;
    background: #e6e6e6;
    font-size: 23px;
}

.menus {
    display: flex;
    align-items: center;
    gap: 39px;
    padding-left: 37px;
}

.apple-logo {
    width: 24px;
    height: 28px;
}

.status {
    display: flex;
    align-items: center;
    gap: 33px;
    padding-right: 34px;
    font-size: 24px;
}

.status svg {
    height: 28px;
    width: 30px;
}

.siri {
    width: 26px;
    height: 26px;
    border-radius: 50%;
    background: radial-gradient(circle, #fff 0 12%, transparent 45%), conic-gradient(#4cc7a0, #3c62d8, #50b8f0, #7a3ac8, #d8405c, #555, #4cc7a0);
}

/* window */

.window {
    flex: 1;
    min-height: 0;
    margin-top: 7px;
    display: flex;
    flex-direction: column;
    border-top: 2px solid #fff;
    border-radius: 18px;
    overflow: hidden;
    background: #f0f0f0;
    box-shadow: 0 0 0 2px #24202c;
}

.titlebar {
    height: 47px;
    display: grid;
    grid-template-columns: 1fr auto 1fr;
    align-items: center;
}

.lights {
    display: flex;
    gap: 15px;
    padding-left: 14px;
}

.lights i {
    width: 22px;
    height: 22px;
    border-radius: 50%;
    background: #cdcdcd;
    border: 2px solid #767676;
}

.titlebar h1 {
    margin: 0;
    display: flex;
    align-items: center;
    gap: 9px;
    font-size: 24px;
    font-weight: 700;
    color: #737373;
}

.titlebar h1 span {
    font-weight: 400;
    color: #a8a8a8;
}

.doc-icon {
    width: 24px;
    height: 28px;
}

.toolbar {
    height: 79px;
    padding: 3px 0 0 12px;
    display: grid;
    grid-template-columns: 872fr 941fr 1311fr 746fr 214fr;
}

.tools {
    display: flex;
    gap: 15px;
    align-items: flex-start;
}

.tool {
    display: flex;
    flex-direction: column;
    align-items: center;
    gap: 7px;
    color: #6a6a6a;
    font-size: 20px;
    line-height: 24px;
    white-space: nowrap;
}

.tool > span {
    padding: 0 7px;
}

.tool button {
    width: 80px;
    height: 40px;
    display: flex;
    align-items: center;
    justify-content: center;
    border: 2px solid #a6a6a6;
    border-radius: 10px;
    background: transparent;
}

.tool button.small {
    width: 73px;
}

.tool button.zoom {
    width: 114px;
    gap: 10px;
    font-weight: 500;
}

.tool svg {
    width: 28px;
    height: 26px;
    fill: none;
    stroke: #666;
    stroke-width: 2;
}

.tool svg.chev {
    width: 16px;
    height: 11px;
    stroke: none;
}

.tool svg .solid, .seg svg .solid {
    fill: currentColor;
    stroke: none;
}

.switch {
    display: flex;
    width: 203px;
    border: 2px solid #a6a6a6;
    border-radius: 10px;
    overflow: hidden;
}

.tool .switch button {
    flex: 1;
    height: 36px;
    border: 0;
    border-radius: 0;
}

.tool .switch .on {
    background: #a4a4a4;
    border: 2px solid #808080;
    border-radius: 8px 6px 6px 8px;
}

.tool .switch .on svg {
    stroke: #fff;
}

.switch-labels {
    display: flex;
    width: 203px;
}

.switch-labels span {
    flex: 1;
    text-align: center;
}

.doctabs {
    height: 53px;
    display: grid;
    grid-template-columns: 51px 1fr 51px;
    align-items: center;
    border-bottom: 2px solid #000;
    color: #666;
    font-size: 20px;
}

.doctabs span {
    grid-column: 2;
    text-align: center;
}

.newtab {
    height: 51px;
    border: 0;
    border-top: 2px solid #000;
    border-left: 2px solid #333;
    background: #d6d6d6;
}

.newtab svg {
    width: 22px;
    height: 22px;
    display: block;
    margin: auto;
}

.work {
    flex: 1;
    min-height: 0;
    display: flex;
}

.sheet {
    flex: 1;
    min-width: 0;
    display: flex;
    flex-direction: column;
}

/* sheet tabs */

.sheets {
    height: 50px;
    display: grid;
    grid-template-columns: 87px 247px 212px 190px 241px 336px 365px 203px 206px 191px 334px 306px 234px 294px 1fr 86px;
    align-items: center;
    border-bottom: 2px solid #999;
    color: #333;
}

.sheets a, .tabs a {
    height: 36px;
    line-height: 36px;
    text-align: center;
    white-space: nowrap;
}

.sheets .add {
    height: 26px;
    border: 0;
    border-right: 2px solid #aaa;
    background: none;
}

.sheets .add svg {
    width: 22px;
    height: 22px;
    display: block;
    margin: auto;
}

.sep {
    position: relative;
}

.sep::after {
    content: "";
    position: absolute;
    right: 0;
    top: 6px;
    bottom: 6px;
    width: 2px;
    background: #a6a6a6;
}

.sheets .current, .tabs .current {
    background: #456179;
    color: #fff;
    border-radius: 10px;
    font-weight: 500;
}

.sheets .cut {
    min-width: 0;
    overflow: hidden;
    text-align: left;
    padding-left: 62px;
}

.pager {
    height: 48px;
    display: flex;
    align-items: center;
    justify-content: center;
    gap: 30px;
    border-left: 2px solid #999;
}

.pager svg {
    width: 14px;
    height: 28px;
}

/* rulers and canvas */

.ruler-x {
    width: 100%;
    height: 29px;
    display: block;
    border-bottom: 2px solid #d5d5d5;
}

.ruler-y {
    width: 29px;
    height: 100%;
    border-right: 2px solid #d5d5d5;
}

.ruler-x, .ruler-y {
    background: #f0f0f0;
    font-size: 9px;
}

.ruler-x text, .ruler-y text {
    fill: #444;
}

.ruler-x path, .ruler-y path {
    stroke: #b4b4b4;
    stroke-width: 1;
    vector-effect: non-scaling-stroke;
}

.stage {
    flex: 1;
    min-height: 0;
    display: flex;
    background: #fff;
    border-bottom: 2px solid #a6a6a6;
}

.page {
    flex: 1;
    min-width: 0;
    display: flex;
    flex-direction: column;
}

.canvas {
    flex: 1;
    min-height: 0;
    overflow: hidden;
}

.hscroll {
    height: 26px;
    background: #f9f9f9;
    border-top: 2px solid #ccc;
}

.vscroll {
    width: 28px;
    background: #fafafa;
    border-left: 2px solid #ccc;
    border-right: 2px solid #ccc;
}

.vscroll i {
    display: block;
    width: 16px;
    height: 555px;
    margin: 336px auto 0;
    border-radius: 8px;
    background: #919191;
}

.foot {
    height: 63px;
    background: linear-gradient(#fff, #fdfdfd 25%, #e6e6e6);
}

.peek {
    display: flex;
    height: 11px;
    margin-left: 253px;
}

.peek i {
    border-left: 2px solid #a6a6a6;
}

.colhead {
    height: 28px;
    display: flex;
    align-items: center;
    padding-left: 200px;
}

.ring, .handle {
    width: 38px;
    height: 38px;
    flex: none;
    border: 2px solid #ccc;
    border-radius: 50%;
    background: #fff;
    display: grid;
    place-items: center;
}

.ring::before {
    content: "";
    width: 17px;
    height: 17px;
    border: 2px solid #456179;
    border-radius: 50%;
}

.handle::before {
    content: "";
    width: 9px;
    height: 16px;
    border: solid #456179;
    border-width: 0 2px;
}

.handle {
    margin-left: 19px;
}

.letters {
    display: flex;
    height: 28px;
    margin-left: 16px;
    border: solid #ccc;
    border-width: 2px 0;
    border-radius: 8px 0 0 0;
}

.letters span, .rowhead span {
    display: flex;
    align-items: center;
    justify-content: center;
    color: #666;
    font-size: 20px;
}

.letters span {
    flex: none;
    border-left: 2px solid #ccc;
}

.letters .hot, .rowhead .hot {
    background: #d6dee2;
}

.body {
    display: flex;
    align-items: flex-start;
}

.rowhead {
    flex: none;
    width: 48px;
    margin: 18px 18px 0 186px;
    border: 2px solid #ccc;
    border-radius: 8px 8px 0 0;
}

.rowhead span {
    border-bottom: 2px solid #ccc;
}

.rowhead span:first-child {
    padding-bottom: 24px;
}

/* table */

table {
    flex: none;
    width: 2545px;
    table-layout: fixed;
    border-collapse: collapse;
    background: #fff;
    font-family: "Liberation Sans", Arial, sans-serif;
    font-size: 22px;
    line-height: 26px;
}

td {
    padding: 0 0 3px;
    border: 2px solid #a6a6a6;
    text-align: center;
    vertical-align: bottom;
    white-space: nowrap;
}

tr:first-child td {
    border-top-style: hidden;
}

.bold { font-weight: 700; }
.s24 { font-size: 24px; }
.s26 { font-size: 26px; }
.s28 { font-size: 28px; line-height: 35px; }
.mid { vertical-align: middle; padding: 2px 0 0; }
.top { vertical-align: top; padding-top: 8px; }
.left { text-align: left; padding-left: 9px; }
.near { text-align: left; padding-left: 5px; }
.right { text-align: right; padding-right: 9px; }
.powder { font-size: 26px; font-weight: 700; -webkit-text-stroke: 1px #000; padding-bottom: 6px; }
.title { padding-top: 3px; }

.green { background: #75f94c; }
.yellow { background: #fffc54; }
.pink { background: #ea529e; }
.orange { background: #f19a38; }
.cyan { background: #74fafd; }
.start { background: #f8da78; }
.max { background: #ea46c8; }
.shade { background: #e6e6e6; }

.ink { border: 2px solid #000; }
.b-dim { border-bottom: 2px solid #4d4d4d; }
.lr-pale { border-left: 2px solid #a6a6a6; border-right: 2px solid #a6a6a6; }
.l-med { border-left: 4px solid #000; }
.r-med { border-right: 4px solid #000; }
.b-med { border-bottom: 4px solid #000; }
.t-big { border-top: 5px solid #000; }
.l-big { border-left: 5px solid #000; }
.r-big { border-right: 5px solid #000; }
.b-big { border-bottom: 5px solid #000; }
.t-gray { border-top: 5px solid #4d4d4d; }
.l-gray { border-left: 5px solid #4d4d4d; }
.r-gray { border-right: 5px solid #4d4d4d; }
.b-gray { border-bottom: 5px solid #4d4d4d; }
.r-green { border-right: 5px solid #387d22; }
.lr-cyan { border-left: 6px solid #74fafd; border-right: 6px solid #74fafd; }
.b-cyan { border-bottom: 6px solid #74fafd; }
.lr-none { border-left-style: hidden; border-right-style: hidden; }
.b-none { border-bottom-style: hidden; }

.picked {
    position: relative;
}

.picked .selection {
    position: absolute;
    inset: -5px -5px -4px;
    border: 2px solid #456179;
}

.selection::before, .selection::after {
    content: "";
    position: absolute;
    width: 13px;
    height: 13px;
    border: 2px solid #456179;
    border-radius: 50%;
    background: #fff;
}

.selection::before { left: -7px; top: -7px; }
.selection::after { right: -7px; bottom: -7px; }

/* inspector */

.inspector {
    width: 497px;
    flex: none;
    border-left: 3px solid #a6a6a6;
    background: linear-gradient(transparent 97%, #e4e4e4), #f6f6f6;
}

.tabs {
    height: 50px;
    display: grid;
    grid-template-columns: 124px 124px 114px 1fr;
    align-items: center;
    border-bottom: 2px solid #ccc;
    color: #333;
}

.tabs .sep::after {
    background: #ccc;
}

.stylebox {
    height: 84px;
    margin: 19px 18px 0;
    padding: 0 9px;
    display: flex;
    align-items: center;
    border: 2px solid #a6a6a6;
    border-radius: 9px;
    background: #fff;
    font-size: 27px;
}

.chev {
    width: 20px;
    height: 12px;
}

.stylebox .chev {
    width: 24px;
    height: 14px;
    margin-left: auto;
}

.stylebox button {
    width: 93px;
    height: 36px;
    margin-left: 24px;
    border: 0;
    border-radius: 6px;
    background: #456179;
    color: #fff;
    font-size: 20px;
    font-weight: 700;
}

.form {
    padding: 0 28px 0 27px;
}

.form hr {
    height: 2px;
    margin: 0 2px;
    border: 0;
    background: #a0a0a0;
}

.form .first { margin-top: 19px; }
.form .after-modes { margin-top: 29px; }
.form .after-char { margin-top: 22px; }
.form .after-color { margin-top: 25px; }
.form .after-wrap { margin-top: 28px; }
.form .after-spacing { margin-top: 23px; }

.modes {
    height: 40px;
    margin: 28px 20px 0;
    display: flex;
    border-radius: 10px;
    background: #bfbfbf;
}

.modes button {
    flex: 216;
    border: 0;
    border-radius: 10px;
    background: none;
}

.modes .on {
    flex: 182;
    border: 2px solid #444;
    background: #fff;
}

.heading {
    display: block;
    height: 28px;
    line-height: 28px;
    margin: 29px 2px 0;
    font-weight: 600;
}

.pick {
    display: grid;
    align-items: center;
    height: 40px;
}

.pick select {
    grid-area: 1 / 1;
    width: 100%;
    height: 100%;
    padding-left: 17px;
    appearance: none;
    border: 2px solid #555;
    border-radius: 10px;
    background: #fff;
    color: #222;
}

.pick svg {
    grid-area: 1 / 1;
    justify-self: end;
    margin-right: 12px;
    pointer-events: none;
}

.pick.font {
    height: 38px;
    margin-top: 22px;
}

.updown {
    width: 16px;
    height: 24px;
}

.pick.muted select {
    background: #fafafa;
    border-color: #a6a6a6;
    color: #777;
}

.muted svg {
    color: #777;
}

.pick.muted {
    width: 243px;
}

.line {
    display: flex;
    align-items: center;
    justify-content: space-between;
    height: 40px;
    margin-top: 16px;
}

.wide {
    width: 294px;
}

.size {
    display: flex;
    align-items: center;
    gap: 5px;
}

.size input {
    width: 77px;
    height: 34px;
    padding-right: 4px;
    border: 2px solid #555;
    background: #fff;
    text-align: right;
}

.stepper {
    width: 28px;
    height: 40px;
    border: 2px solid #555;
    border-radius: 10px;
    background: #fff;
    overflow: hidden;
}

.stepper svg {
    display: block;
    width: 100%;
    height: 100%;
}

.seg {
    display: flex;
    height: 40px;
    border: 2px solid #555;
    border-radius: 10px;
    background: #fff;
    overflow: hidden;
}

.form > .seg {
    margin: 13px 4px 0 0;
}

.form > .seg.align {
    margin-top: 23px;
}

.seg button {
    flex: 1;
    border: 0;
    background: none;
    display: flex;
    align-items: center;
    justify-content: center;
}

.seg button i {
    font-family: "Liberation Mono", monospace;
}

.seg .on {
    background: #bfbfbf;
    border: solid #555;
    border-width: 0 2px;
}

.seg .last {
    border-right: 0;
}

.seg .sep::after {
    background: #555;
}

.seg svg {
    width: 26px;
    height: 26px;
    fill: none;
    stroke: #111;
    stroke-width: 2;
}

.seg svg.even {
    stroke-width: 2;
}

.seg .tall {
    height: 32px;
}

.seg svg.dim {
    width: 32px;
    stroke: #666;
    color: #666;
}

.gear {
    width: 114px;
    height: 40px;
    display: flex;
    align-items: center;
    justify-content: center;
    gap: 6px;
    border: 2px solid #555;
    border-radius: 10px;
    background: #fff;
}

.gear svg {
    width: 26px;
    height: 26px;
}

.gear .chev {
    width: 16px;
    height: 12px;
}

.charstyle, .color {
    padding-left: 2px;
}

.line.color {
    height: 38px;
    margin-top: 23px;
}

.color span {
    display: flex;
    align-items: center;
    gap: 7px;
}

.swatch {
    width: 118px;
    height: 38px;
    margin-right: 3px;
    display: flex;
    border: 1px solid #ccc;
    border-radius: 10px;
    background: #fff;
    overflow: hidden;
}

.well {
    flex: 1;
    background: #000;
}

.wheel {
    width: 26px;
    height: 26px;
    margin: 5px 6px;
    border-radius: 50%;
    background: radial-gradient(circle, #fff, transparent 75%), conic-gradient(#f66, #f6f, #66f, #6df, #6f6, #ee6, #f66);
}

.line.wrap {
    height: 26px;
    margin-top: 42px;
    justify-content: flex-start;
    gap: 12px;
}

.wrap input {
    width: 26px;
    height: 26px;
    margin-left: 2px;
    appearance: none;
    border: 2px solid #555;
    border-radius: 6px;
    background: #fff;
}

.line.spacing {
    margin-top: 23px;
}

.spacing > svg {
    width: 12px;
    height: 18px;
    margin-left: 4px;
}

.spacing label {
    flex: 1;
    padding-left: 16px;
    font-weight: 600;
}

.spacing .pick {
    width: 233px;
}

/* dock */

.desk {
    position: relative;
    height: 150px;
    padding: 9px 96px;
}

.dock {
    position: relative;
    height: 132px;
    display: flex;
    padding: 0 3px;
    border: 2px solid #f0f0f0;
    border-radius: 38px;
    background: #c8c8c8;
    box-shadow: 0 0 0 2px #0c0a10;
}

.app {
    position: relative;
    flex: 1;
    min-width: 0;
    padding-top: 18px;
    display: flex;
    justify-content: center;
    align-items: flex-start;
}

.app svg {
    flex: none;
    width: 84px;
    height: 84px;
    overflow: visible;
    filter: drop-shadow(0 1px 2px rgba(0, 0, 0, .35));
}

.app symbol svg, .app svg svg {
    filter: none;
}

.run::after {
    content: "";
    position: absolute;
    left: calc(50% - 4px);
    bottom: 3px;
    width: 7px;
    height: 7px;
    border-radius: 50%;
    background: #4a4a4a;
}

.app svg.roomy {
    width: 88px;
    height: 88px;
}

.petals rect {
    mix-blend-mode: multiply;
}

.badge {
    position: absolute;
    right: -1px;
    top: 7px;
    width: 40px;
    height: 40px;
    border-radius: 50%;
    background: #ea5545;
    color: #fff;
    font-size: 22px;
    font-weight: 500;
    line-height: 40px;
    text-align: center;
}

.bar {
    width: 50px;
    flex: none;
    margin: 15px 0;
    background: linear-gradient(#8d8d8d, #8d8d8d) center / 2px 100% no-repeat;
}

.app svg.file {
    width: 70px;
    height: 97px;
    margin-top: -6px;
}

.app svg.trash {
    width: 76px;
    height: 94px;
    margin-top: -4px;
}

.mini {
    justify-content: flex-end;
    padding-top: 74px;
}

.app.mini svg, .app svg.stamp {
    width: 32px;
    height: 32px;
}

.app.mini svg {
    margin-right: 6px;
}

.thumb {
    padding-top: 28px;
}

.app svg.shot {
    width: 100px;
    height: 60px;
}

.app svg.shot.doc {
    height: 70px;
}

.app svg.stamp {
    position: absolute;
    right: 8px;
    bottom: 22px;
}

.tv-text {
    fill: #fff;
    font-size: 44px;
    font-weight: 500;
}

.cal-month {
    fill: #fff;
    font-size: 18px;
    font-weight: 600;
    text-anchor: middle;
}

.cal-day {
    fill: #222;
    font-size: 58px;
    font-weight: 300;
    text-anchor: middle;
}

.pdf {
    fill: #777;
    font-size: 14px;
    text-anchor: middle;
}

.shotfile {
    position: absolute;
    right: 68px;
    top: 17px;
    bottom: 2px;
    display: flex;
    flex-direction: column;
    justify-content: space-between;
    align-items: flex-end;
    color: #fff;
    font-size: 22px;
    font-weight: 600;
}

.shotfile i {
    width: 110px;
    height: 72px;
    margin-right: 6px;
    border: 5px solid #e8e8e8;
    background: #3a2c52;
}
```

FILE: script.js
```js
const widths = {
    A: 317, B: 142, C: 126, D: 97, E: 98, F: 134, G: 97, H: 96, I: 95, J: 69, K: 73, L: 78, M: 74,
    N: 74, O: 79, P: 88, Q: 81, R: 131, S: 80, T: 85, U: 116, V: 83, W: 72, X: 84, Y: 76
};
const letters = Object.keys(widths);

// number, height, cells as "column=value"
const rows = [
    [21, 92, 'A=Table 3 Powder<br>Selection', 'B=HVarget'],
    [22, 50, 'A=Test Load', 'B=1(Start)', 'C=2', 'D=3', 'E=4', 'F=5 ( MAX)'],
    [23, 50, 'B=39.2', 'C=40.5', 'D=41.7', 'E=43.0', 'F=44.2'],
    [24, 50],
    [25, 63, 'B=39.2', 'F=44.2'],
    [26, 50, 'A=Should be', 'B=36', 'F=39.2'],
    [27, 50],
    [28, 50],
    [29, 50, 'J=H380', 'L=H4350', 'N=IMR3031', 'P=IMR4064', 'R=IMR4350', 'T=HSuprfmance', 'V=HVarget', 'X=WStaball 6.5'],
    [30, 131, 'A=.22-250 Rem', 'B=Bullet L<br>(Less Boat<br>tail) (2)', 'C=Bullet L<br>-Full (")', 'D=Bullet<br>Dia (")', 'E=Neck L', 'F=BC (G1)',
        'G=COAL<br>Lands<br>(")', 'H=Base to<br>Ogive<br>(Lands)<br>(")', 'I=COAL<br>Manual<br>(")'],
    [31, 51], [32, 50], [33, 50], [34, 51], [35, 50], [36, 50], [37, 50], [38, 51], [39, 50], [40, 50], [41, 51],
    [42, 50],
    [43, 50, 'A=Bergara 6.5 C’Moor'],
    [44, 50], [45, 50], [46, 50], [47, 51], [48, 50], [49, 50], [50, 50], [51, 51], [52, 50]
];

const bullets = {
    31: ['Hndy 52 gr HPBT Match', '0.672|0.716|0.224|0.248|0.229|2.400|2.070|2.350', 'J38.0 K41.0 L38.0 M41.0'],
    32: ['Berger 52 gr Varm', '0.710|Flat Bottom|0.224|0.248|0.197|2.343|2.002|2.350', 'J34.5 K38.5 V32.0 W36.0'],
    33: ['Hndy 53 gr HP', '0.722|Flat Bottom|0.224|0.248|0.290|2.383|2.064|2.350', 'L39.0 M41.0 P31.3 Q35.5 V30.7 W35.7'],
    34: ['Hndy 55 SP', '0.717|Flat Bottom|0.224|0.248|0.235|2.418|2.069|2.350', 'J35.0 K40.6 L37.0 M39.0 N32.0 O34.1 P31.3 Q34.9 V30.8 W34.6'],
    35: ['Hndy 55 gr Vmax (fact)', '0.811|Flat Bottom|0.224|0.248|0.255|2.476|2.119|2.340', ''],
    36: ['Berger 55 gr Varm HP', '0.754|Flat Bottom|0.224|0.248|0.210|2.476|2.119|2.350', 'J35.5 K39.7 P31.5 Q35.5 V31.5 W35.5'],
    37: ['Nosler 62 gr Varmageddon', '0.771|Flat Bottom|0.224|0.248|0.251|2.412|2.110|2.350', 'J34.5 K38.5 P29.0 Q33.0 R34.5 S38.5 V30.0 W34.0'],
    38: ['Sierra 69 gr Matchking HPBT', '0.809|0.909|0.224|0.248|0.301|2.499|2.118|2.260', 'P34.8 Q36.2 R34.8 S36.2'],
    39: ['Nosler 70 RDF', '0.750|0.982|0.224|0.248|0.416|2.549|2.097|2.350', 'P28.5 Q32.5 R33.0 S37.0 V28.5 W32.5'],
    40: ['Hornady 73 gr ELDM', '0.891|1.038|0.224|0.248|0.398|2.545|2.107|2.490', 'P30.1 Q32.8 T36.3 U41.0 V29.3 W33.4'],
    41: ['WIN Factory 64 Gr Power Pt', '0.812|0.812|0.224|0.248|0.251|2.520|2.150|2.338', ''],
    44: ['Hndy 120 gr ELDM', '1.060|1.206|0.264|0.285|0.486|2.780|2.245|2.710', 'L40.7 M43.9 R40.7 S44.6 T44.2 U48.5 V36.0 W39.2'],
    45: ['Hndy 123 gr SST', '1.078|1.242|0.264|0.285|0.510|2.848|2.258|2.710', 'L40.7 M43.9 R40.7 S44.6 X44.2 Y48.5'],
    46: ['Lapua 123 gr Scenar', '1.120|1.237|0.264|0.285|0.506|2.835|2.246|2.710', 'L40.7 M43.9 R40.7 S44.6 V36.0 W39.2 X44.2 Y48.5'],
    47: ['Hndy 130 gr ELDM', '1.102|1.302|0.264|0.285|0.527|2.843|2.492|2.755', 'L40.0 M44.8 P35.0 Q38.8 T40.5 U44.9 V36.0 W39.8 X40.5 Y44.9'],
    48: ['Nosler 140gr Accubond', '1.158|1.311|0.264|0.285|0.554|2.869|2.255|2.800', 'L41.1 M42.8 P31.0 Q34.9 R39.8 S43.0 V35.5 W38.2 X41.5 Y45.5'],
    49: ['Nosler 140 gr RDF', '1.225|1.305|0.264|0.285|0.488|2.793|2.284|2.805', 'J35.0 K39.0 L37.0 M41.0 R37.5 S41.5'],
    50: ['Speers140 gr Hot Cor', '1.224|1.423|0.264|0.285|0.658|2.900|2.262|2.805', 'J35.0 K39.0 L37.0 M41.0 R37.5 S41.5 V34.5 W38.5'],
    51: ['Hndy 143 gr ELDX', '1.235|NA|0.264|0.285|0.498|2.795|2.296|2.760', 'L36.7 M40.5 P33.0 Q36.5 V33.4 W37.0']
};

const byId = id => document.getElementById(id);
const cells = {};

for (const col of letters) {
    byId('cols').insertAdjacentHTML('beforeend', `<col style="width:${widths[col]}px">`);
    byId('peek').insertAdjacentHTML('beforeend', `<i style="width:${widths[col]}px"></i>`);
    byId('letters').insertAdjacentHTML('beforeend', `<span class="${col === 'N' ? 'hot' : ''}" style="width:${widths[col]}px">${col}</span>`);
}

for (const [num, height, ...values] of rows) {
    const labelHeight = num === 21 ? height - 20 : height;
    byId('rowhead').insertAdjacentHTML('beforeend', `<span class="${num === 25 ? 'hot' : ''}" style="height:${labelHeight}px">${num}</span>`);

    const tr = document.createElement('tr');
    tr.style.height = height + 'px';
    for (const col of letters) {
        if (num === 29 && 'KMOQSUWY'.includes(col)) continue;
        const td = document.createElement('td');
        if (num === 29 && col >= 'J') td.colSpan = 2;
        cells[col + num] = td;
        tr.append(td);
    }
    byId('rows').append(tr);

    for (const v of values) {
        cells[v[0] + num].innerHTML = v.slice(2);
    }
    if (bullets[num]) {
        const [name, specs, charges] = bullets[num];
        cells['A' + num].textContent = name;
        specs.split('|').forEach((s, i) => cells[letters[i + 1] + num].textContent = s);
        charges.split(' ').filter(Boolean).forEach(c => cells[c[0] + num].textContent = c.slice(1));
    }
}

// mark('A21:F22', 'bold') adds classes to every cell in the range
function mark(range, ...classes) {
    const [from, to = from] = range.split(':');
    for (let c = letters.indexOf(from[0]); c <= letters.indexOf(to[0]); c++) {
        for (let r = +from.slice(1); r <= +to.slice(1); r++) {
            const cell = cells[letters[c] + r];
            if (cell) cell.classList.add(...classes);
        }
    }
}

mark('A21', 'green', 'bold', 's28', 'top', 'left', 'title', 'r-green');
mark('B21', 'bold', 's26', 'mid', 'r-green');
mark('A21:F21', 'b-big');
mark('A22:F22', 'bold', 's24', 'mid', 'b-big');
mark('A22', 's28', 'left', 'l-big');
mark('B22:F22', 'l-big');
mark('C22:E22', 'right');
mark('F22', 'near');
mark('B23:E23', 'yellow');
mark('B23:F23', 'bold', 's26', 'mid', 'l-gray', 'b-gray');
mark('F23', 'pink');
mark('B25', 'yellow', 's24');
mark('F25', 'pink', 's26');
mark('B25', 'bold', 'top', 't-gray', 'r-gray', 'b-gray', 'l-gray');
mark('F25', 'bold', 'top', 't-gray', 'r-gray', 'b-gray', 'l-gray');
mark('A26:F26', 'orange', 'bold', 's24');

mark('A29:I29', 'b-med');
mark('J29:O29', 'powder', 't-gray', 'l-gray', 'b-gray');
mark('P29:Y29', 'powder', 't-big', 'l-big', 'b-big');
mark('X29', 'r-big');
mark('A30:Y30', 'ink', 'bold');
mark('A30', 'top', 'l-big', 'r-big', 'b-cyan');
mark('B30:I30', 'near', 'mid');
mark('V30:W30', 'b-med');

mark('A31:Y41', 'ink');
mark('A31:A41', 'cyan', 'left', 'top', 'l-big', 'r-big');
mark('B31:I41', 'yellow');
mark('B41:I41', 'mid', 'b-dim');
mark('B40:I40', 'b-dim');
mark('L35:Y35', 'lr-pale');
mark('J34:Y35', 'b-dim');
mark('A44:Y52', 'ink');
mark('A44:A52', 'cyan', 'left', 'top', 'l-med', 'r-med');
mark('B44:I52', 'yellow');

for (const col of 'JLNPRTVX') {
    const next = letters[letters.indexOf(col) + 1];
    mark(col + '30', 'start');
    mark(next + '30', 'max');
    mark(`${col}30:${col}41`, 'l-gray');
    mark(`${col}44:${col}52`, 'l-med');
    cells[col + 30].textContent = 'Start';
    cells[next + 30].textContent = 'Max';
}
mark('Y30:Y41', 'r-gray');
mark('Y42:Y52', 'r-med');

for (const r of ['J31:Y31', 'J33:K33', 'X33:Y33', 'J37:Y37', 'J39:Y39', 'J41:Y41', 'W46:X46']) {
    mark(r, 'shade');
}

for (const r of ['J41:K41', 'N41:O41', 'R41:Y41']) mark(r, 'b-gray');
for (const r of ['L41:M41', 'P41:Q41']) mark(r, 'b-med');
mark('A41:A43', 'b-cyan');
mark('A42:A43', 'lr-cyan');
mark('A43', 'bold', 'near');
mark('I42:I43', 'lr-none');
mark('I42', 'b-none');
mark('J42:Y42', 'b-med');
mark('B43:I43', 'b-med');
mark('J43:Y44', 'b-big');

cells.N25.classList.add('picked');
cells.N25.innerHTML = '<span class="selection"></span>';

// rulers are drawn in document points, numbered every 100
const tickStart = n => n % 10 === 0 ? 0 : n % 5 === 0 ? 9 : 11;

let ticks = 'M15.5 0V15';
let labels = '';
for (let n = 0; 56 + n * 10 < 1969; n++) {
    const x = 56 + n * 10;
    ticks += `M${x} ${tickStart(n)}V15`;
    if (n % 10 === 0) labels += `<text x="${x + 3}" y="9.5">${n * 10}</text>`;
}
byId('ruler-x').innerHTML = `<path d="${ticks}"/>${labels}`;

ticks = '';
labels = '';
for (let i = 0; i < 98; i++) {
    ticks += `M${tickStart(i - 9)} ${i * 10 + 1.5}H16`;
}
for (let n = 600; n <= 1500; n += 100) {
    [...String(n)].forEach((digit, i) => {
        labels += `<text x="2" y="${n - 597 + i * 11.6}">${digit}</text>`;
    });
}
byId('ruler-y').innerHTML = `<path d="${ticks}"/>${labels}`;
```
